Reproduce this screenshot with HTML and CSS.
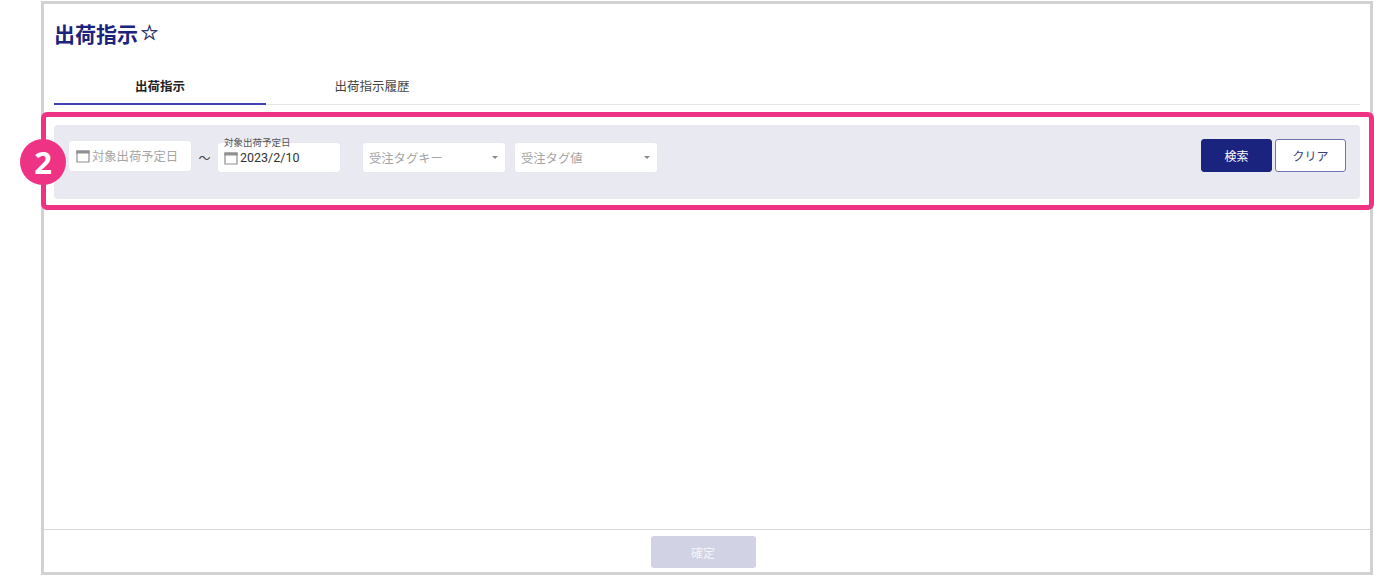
FILE: index.html
```html
<!DOCTYPE html>
<html lang="ja">
<head>
  <meta charset="UTF-8">
  <meta name="viewport" content="width=device-width, initial-scale=1.0">
  <title>出荷指示</title>
  <link rel="stylesheet" href="styles.css">
</head>
<body>

<div class="waku">
  <div class="tresc">
    <h1 class="tytul">出荷指示<span class="gwiazdka">☆</span></h1>

    <div class="zakladki">
      <div class="zakladka aktywna">出荷指示</div>
      <div class="zakladka">出荷指示履歴</div>
    </div>

    <div class="panel">
      <div class="pole pole-data pierwsza">
        <svg class="kalendarz" viewBox="0 0 14 14"><path d="M1 2h12v11H1z" /><path class="pasek-kal" d="M1 2h12v2H1z" /></svg>
        <span class="placeholder">対象出荷予定日</span>
      </div>
      <span class="tylda">～</span>
      <div class="pole pole-data">
        <span class="etykieta">対象出荷予定日</span>
        <svg class="kalendarz" viewBox="0 0 14 14"><path d="M1 2h12v11H1z" /><path class="pasek-kal" d="M1 2h12v2H1z" /></svg>
        <span class="wartosc">2023/2/10</span>
      </div>
      <div class="pole pole-select odstep">
        <span class="placeholder">受注タグキー</span>
        <span class="strzalka"></span>
      </div>
      <div class="pole pole-select">
        <span class="placeholder">受注タグ値</span>
        <span class="strzalka"></span>
      </div>
      <div class="przyciski">
        <button class="przycisk glowny">検索</button>
        <button class="przycisk">クリア</button>
      </div>
    </div>
  </div>

  <div class="stopka">
    <button class="potwierdz">確定</button>
  </div>
</div>

<!-- ramka z numerem na wierzchu -->
<div class="ramka"></div>
<div class="numer">2</div>

</body>
</html>
```

FILE: styles.css
```css
* {
  margin: 0;
  padding: 0;
  box-sizing: border-box;
}
body {
  width: 1374px;
  height: 576px;
  padding: 1px 1px 1px 41px;
  background: white;
  font-family: Roboto, "Noto Sans CJK JP", sans-serif;
  color: #333;
  overflow: hidden;
  position: relative;
}
.waku {
  display: flex;
  flex-direction: column;
  height: 574px;
  border: 3px solid #d2d2d2;
}
.tresc {
  flex: 1;
  padding: 0 10px;
}
.tytul {
  display: flex;
  align-items: center;
  height: 58px;
  font-size: 21px;
  font-weight: 700;
  color: #1a237e;
}
.gwiazdka {
  margin-left: 2px;
  font-size: 21px;
  font-weight: 400;
  color: #222a5e;
  font-family: "DejaVu Sans", sans-serif;
  -webkit-text-stroke: 0.4px #222a5e;
}
.zakladki {
  display: flex;
  height: 40px;
  margin-top: 3px;
  border-bottom: 1px solid #e6e6e6;
}
.zakladka {
  width: 212px;
  height: 40px;
  padding-top: 13px;
  text-align: center;
  font-size: 12.5px;
  line-height: 18px;
  color: #444;
}
.aktywna {
  font-weight: 700;
  color: #222;
  border-bottom: 2px solid #3f3fb0;
}
.panel {
  display: flex;
  align-items: flex-start;
  height: 74px;
  margin-top: 20px;
  padding: 18px 14px 0 15px;
  background: #e8e9f1;
  border-radius: 4px;
}
.pole {
  display: flex;
  align-items: center;
  height: 29px;
  background: white;
  border-radius: 3px;
  box-shadow: 0 0 1px rgba(0, 0, 0, 0.06);
  font-size: 12.3px;
  position: relative;
}
.pole-data {
  width: 122px;
  padding-left: 6px;
}
.pierwsza {
  height: 30px;
  margin-top: -2px;
  padding-left: 7px;
}
.pole-select {
  width: 142px;
  padding: 0 6px;
  justify-content: space-between;
  margin-left: 10px;
}
.odstep {
  margin-left: 23px;
}
.kalendarz {
  width: 14px;
  height: 14px;
  margin-right: 2px;
  fill: none;
  stroke: #8f8f8f;
  stroke-width: 1.2;
}
.pasek-kal {
  fill: #8f8f8f;
}
.placeholder {
  color: #a5a5a5;
}
.wartosc {
  color: #333;
  font-size: 12.5px;
}
.etykieta {
  position: absolute;
  left: 6px;
  top: -6px;
  font-size: 9.5px;
  line-height: 12px;
  color: #555;
}
.tylda {
  width: 27px;
  margin-top: 7px;
  text-align: center;
  font-size: 12px;
  line-height: 18px;
  color: #444;
}
.strzalka {
  width: 0;
  height: 0;
  margin-right: 1px;
  border-left: 3px solid transparent;
  border-right: 3px solid transparent;
  border-top: 3px solid #8a8a8a;
}
.przyciski {
  display: flex;
  gap: 3px;
  margin-left: auto;
  margin-top: -4px;
}
.przycisk {
  width: 71px;
  height: 33px;
  background: white;
  border: 1px solid #6f72ad;
  border-radius: 3px;
  font-family: inherit;
  font-size: 12px;
  color: #3a3f80;
}
.glowny {
  background: #1a237e;
  border-color: #1a237e;
  color: white;
}
.stopka {
  display: flex;
  justify-content: center;
  height: 43px;
  padding: 6px 8px 0 0;
  border-top: 1px solid #d8d8d8;
}
.potwierdz {
  width: 105px;
  height: 32px;
  background: #d1d3e5;
  border: none;
  border-radius: 3px;
  font-family: inherit;
  font-size: 12px;
  color: #f4f4f9;
}
.ramka {
  position: absolute;
  left: 41px;
  top: 112px;
  width: 1333px;
  height: 98px;
  border: 5px solid #ee3384;
  border-radius: 6px;
}
.numer {
  position: absolute;
  left: 20px;
  top: 139px;
  width: 46px;
  height: 46px;
  display: flex;
  align-items: center;
  justify-content: center;
  background: #ee3384;
  border-radius: 50%;
  font-family: "Open Sans", sans-serif;
  font-size: 31px;
  font-weight: 700;
  color: white;
}
```
